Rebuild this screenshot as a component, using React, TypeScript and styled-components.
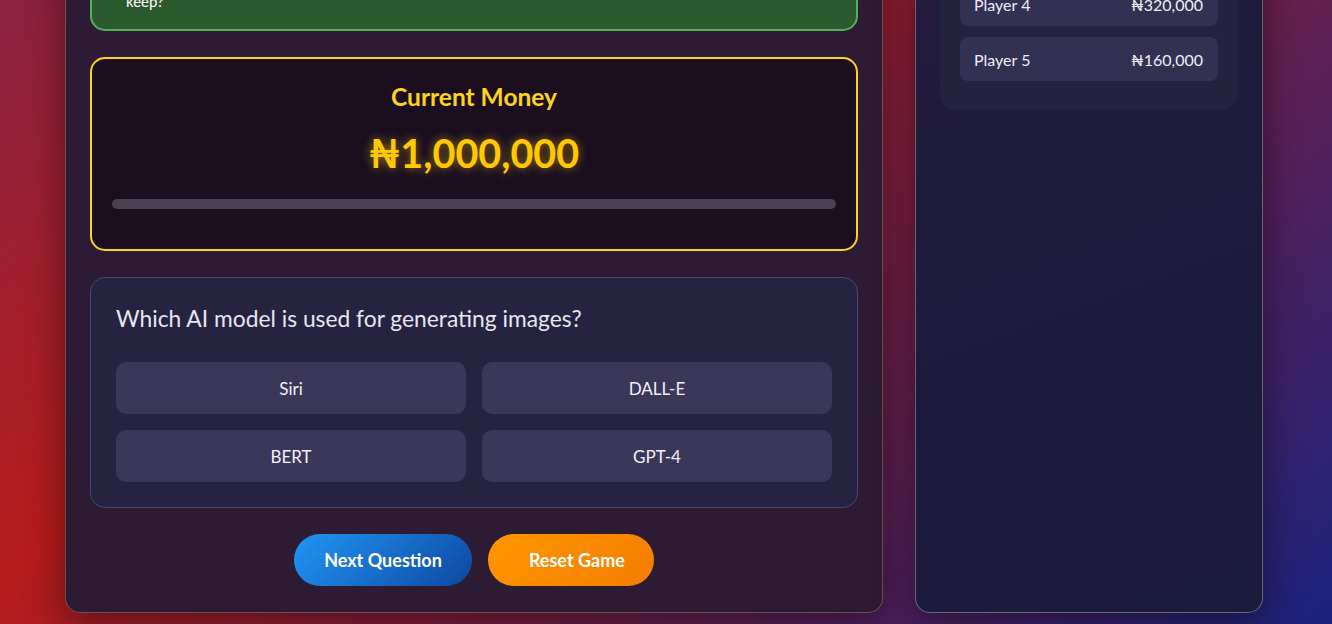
import React from "react";
import styled, { createGlobalStyle } from "styled-components";

const GlobalStyle = createGlobalStyle`
  html, body { margin: 0; padding: 0; height: 100%; }
  html {
    background-color: #4a1f3a;
    background-image: linear-gradient(135deg, #4f2a6f 0%, #b71c1c 50%, #1a237e 100%);
    background-size: 100% 1400px;
    background-position: 0 -776px;
    background-repeat: no-repeat;
  }
  body {
    font-family: "Segoe UI", Lato, "Noto Sans", sans-serif;
    color: #f0eef8;
    overflow: hidden;
  }
  * { box-sizing: border-box; }
`;

const Page = styled.div`
  height: 624px;
  display: flex;
  flex-direction: column;
  justify-content: flex-end;
  padding: 0 0 11px 65px;
  overflow: hidden;
`;

const Layout = styled.div`
  flex-shrink: 0;
  display: grid;
  grid-template-columns: 818px 348px;
  column-gap: 32px;
`;

const GamePanel = styled.section`
  background: linear-gradient(180deg, #2e1b37 0%, #2c1b33 100%);
  border: 1px solid rgba(255, 190, 120, 0.32);
  border-radius: 15px;
  padding: 24px 24px 26px;
  display: flex;
  flex-direction: column;
  gap: 26px;
  box-shadow: 0 10px 40px rgba(0, 0, 0, 0.45);
`;

const SidePanel = styled.aside`
  background: linear-gradient(160deg, #2a1c3e 0%, #1e1b3b 45%, #1b1b3b 100%);
  border: 1px solid rgba(220, 210, 190, 0.4);
  border-radius: 15px;
  padding: 24px;
  box-shadow: 0 10px 40px rgba(0, 0, 0, 0.45);
`;

const GameHeader = styled.header<{ $pad: number }>`
  display: flex;
  flex-direction: column;
  align-items: center;
  gap: 10px;
  padding-top: ${(p) => p.$pad}px;
`;

const Title = styled.h1`
  margin: 0;
  font-size: 30px;
  line-height: 38px;
  color: #ffd700;
`;

const SubTitle = styled.div`
  font-size: 16px;
  line-height: 22px;
  color: #c9c3dd;
`;

const Lifelines = styled.div`
  display: flex;
  justify-content: center;
  gap: 16px;
`;

const LifelineButton = styled.button`
  height: 44px;
  padding: 0 22px;
  border: 1px solid rgba(255, 215, 0, 0.4);
  border-radius: 22px;
  background: #3a2a4a;
  color: #ffd700;
  font-family: inherit;
  font-size: 16px;
`;

const HostMessage = styled.div`
  background: #2b5a2e;
  border: 2px solid #55b05a;
  border-radius: 15px;
  padding: 16px 34px 16px;
  font-size: 15px;
  line-height: 24px;
  color: #ffffff;
`;

const MoneyCard = styled.div`
  background: #1b0f1f;
  border: 2px solid #fdd31c;
  border-radius: 15px;
  padding: 24px 20px 40px;
  display: flex;
  flex-direction: column;
  align-items: stretch;
`;

const MoneyLabel = styled.h2`
  margin: 0;
  text-align: center;
  font-size: 24.5px;
  line-height: 28px;
  font-weight: 700;
  color: #fdd31c;
`;

const MoneyAmount = styled.div`
  margin-top: 18px;
  text-align: center;
  font-size: 39.5px;
  line-height: 48px;
  font-weight: 700;
  color: #ffc800;
  text-shadow: 0 0 10px rgba(255, 200, 0, 0.55);
`;

const ProgressTrack = styled.div`
  margin-top: 22px;
  height: 10px;
  border-radius: 5px;
  background: #4b4152;
  overflow: hidden;
`;

const ProgressFill = styled.div`
  height: 100%;
  background: linear-gradient(90deg, #ffd700, #ff9800);
`;

const QuestionCard = styled.div`
  background: #252340;
  border: 1px solid #4c4674;
  border-radius: 15px;
  padding: 25px;
`;

const QuestionText = styled.p`
  margin: 0 0 29px;
  font-size: 22.8px;
  line-height: 30px;
  color: #e8e6f2;
`;

const OptionGrid = styled.div`
  display: grid;
  grid-template-columns: 1fr 1fr;
  gap: 16px;
`;

const OptionButton = styled.button`
  height: 52px;
  border: none;
  border-radius: 10px;
  background: #3a3759;
  color: #f2f0f8;
  font-family: inherit;
  font-size: 17px;
  cursor: pointer;
`;

const Controls = styled.div`
  display: flex;
  justify-content: center;
  gap: 16px;
`;

const ActionButton = styled.button<{ $from: string; $to: string; $padL: number; $padR: number }>`
  height: 52px;
  padding: 0 ${(p) => p.$padR}px 0 ${(p) => p.$padL}px;
  border: none;
  border-radius: 26px;
  background: linear-gradient(135deg, ${(p) => p.$from}, ${(p) => p.$to});
  color: #ffffff;
  font-family: inherit;
  font-size: 18px;
  font-weight: 700;
  cursor: pointer;
`;

const Leaderboard = styled.div`
  background: #23223f;
  border-radius: 15px;
  padding: 20px 20px 29px;
  display: flex;
  flex-direction: column;
  gap: 11px;
`;

const LeaderTitle = styled.h3<{ $gap: number }>`
  margin: 0 0 ${(p) => p.$gap}px;
  font-size: 20px;
  line-height: 26px;
  color: #ffd700;
  text-align: center;
`;

const PlayerRow = styled.div`
  height: 44px;
  border-radius: 8px;
  background: #333152;
  display: flex;
  align-items: center;
  justify-content: space-between;
  padding: 0 15px 0 14px;
  font-size: 16px;
  color: #eeecf6;
`;

const players = [
  { name: "Player 1", amount: "₦1,000,000" },
  { name: "Player 2", amount: "₦640,000" },
  { name: "Player 3", amount: "₦500,000" },
  { name: "Player 4", amount: "₦320,000" },
  { name: "Player 5", amount: "₦160,000" },
];

const options = ["Siri", "DALL-E", "BERT", "GPT-4"];
const lifelines = ["50:50", "Ask the Audience", "Phone a Friend"];

export default function App() {
  const progress = 0;
  return (
    <>
      <GlobalStyle />
      <Page>
        <Layout>
          <GamePanel>
            <GameHeader $pad={25}>
              <Title>Who Wants to Be a Millionaire?</Title>
              <SubTitle>Question 15 of 15</SubTitle>
            </GameHeader>
            <Lifelines>
              {lifelines.map((l) => (
                <LifelineButton key={l}>{l}</LifelineButton>
              ))}
            </Lifelines>
            <HostMessage>
              Congratulations! You have reached the top prize. Will you walk away now, or risk it all?
              <br />
              keep?
            </HostMessage>
            <MoneyCard>
              <MoneyLabel>Current Money</MoneyLabel>
              <MoneyAmount>₦1,000,000</MoneyAmount>
              <ProgressTrack>
                <ProgressFill style={{ width: `${progress}%` }} />
              </ProgressTrack>
            </MoneyCard>
            <QuestionCard>
              <QuestionText>Which AI model is used for generating images?</QuestionText>
              <OptionGrid>
                {options.map((o) => (
                  <OptionButton key={o}>{o}</OptionButton>
                ))}
              </OptionGrid>
            </QuestionCard>
            <Controls>
              <ActionButton $from="#2196f3" $to="#0d47a1" $padL={30} $padR={30}>
                Next Question
              </ActionButton>
              <ActionButton $from="#ff9800" $to="#f57c00" $padL={41} $padR={29}>
                Reset Game
              </ActionButton>
            </Controls>
          </GamePanel>
          <SidePanel>
            <Leaderboard>
              <LeaderTitle $gap={4}>Leaderboard</LeaderTitle>
              {players.map((p) => (
                <PlayerRow key={p.name}>
                  <span>{p.name}</span>
                  <span>{p.amount}</span>
                </PlayerRow>
              ))}
            </Leaderboard>
          </SidePanel>
        </Layout>
      </Page>
    </>
  );
}
